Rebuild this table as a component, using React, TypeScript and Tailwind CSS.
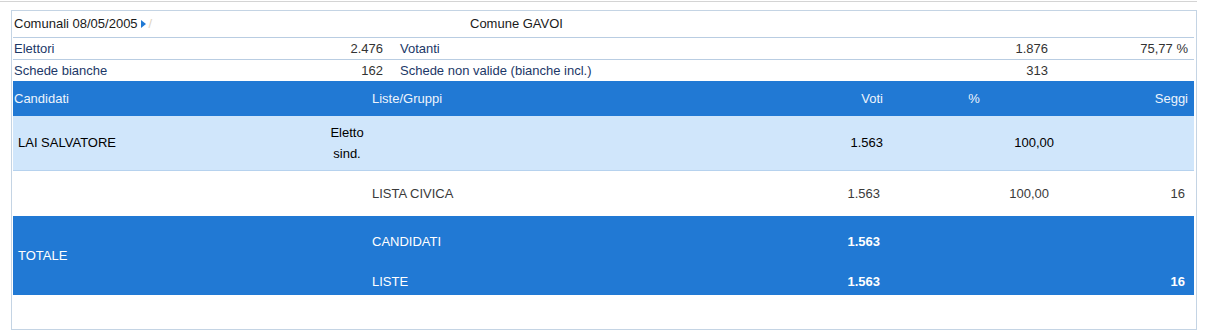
import React from "react"

const font = { fontFamily: '"Liberation Sans", Arial, sans-serif' }

function InfoRow({
  label,
  value,
  label2,
  value2,
  pct,
  last,
}: {
  label: string
  value: string
  label2: string
  value2: string
  pct?: string
  last?: boolean
}) {
  return (
    <div
      className={
        last
          ? "grid h-[21px] grid-cols-[300px_77px_610px_55px_138px] items-center text-[13px]"
          : "grid h-[22px] grid-cols-[300px_77px_610px_55px_138px] items-center border-b border-[#b9cde2] text-[13px]"
      }
    >
      <div className="pl-[1px] text-[#1c3867]">{label}</div>
      <div className="pr-[7px] text-right text-[#333]">{value}</div>
      <div className="pl-[10px] text-[#1c3867]">{label2}</div>
      <div className="pr-[7px] text-right text-[#333]">{value2}</div>
      <div className="pr-[5px] text-right text-[#333]">{pct}</div>
    </div>
  )
}

export default function App() {
  return (
    <div className="h-[336px] w-[1209px] bg-white" style={font}>
      <div className="mt-[1px] h-px w-[1197px] bg-[#d4d4d4]" />

      <div className="ml-[11px] mt-[8px] w-[1186px] border border-[#c4d4e4] pb-[34px] pl-px pr-[2px]">
        {/* election header */}
        <div className="flex h-[27px] items-center border-b border-[#b9cde2] text-[13px] text-[#1a1a1a]">
          <div className="flex w-[457px] items-center pl-[1px]">
            <span>Comunali 08/05/2005</span>
            <svg className="ml-[3px]" width="5" height="8" viewBox="0 0 5 8">
              <path d="M0 0 L5 4 L0 8 Z" fill="#2079d4" />
            </svg>
            <span className="ml-[3px] text-[#e0d4c2]">/</span>
          </div>
          <div>Comune GAVOI</div>
        </div>

        <InfoRow label="Elettori" value="2.476" label2="Votanti" value2="1.876" pct="75,77 %" />
        <InfoRow label="Schede bianche" value="162" label2="Schede non valide (bianche incl.)" value2="313" last />

        {/* results */}
        <div className="grid h-[35px] grid-cols-[312px_44px_431px_88px_172px_133px] items-center bg-[#2179d4] text-[13px] text-[#eef4fc]">
          <div className="pl-[1px]">Candidati</div>
          <div />
          <div className="pl-[3px]">Liste/Gruppi</div>
          <div className="pr-[5px] text-right">Voti</div>
          <div className="text-center">%</div>
          <div className="pr-[5px] text-right">Seggi</div>
        </div>

        <div className="grid h-[55px] grid-cols-[312px_44px_431px_88px_172px_133px] items-center border-b border-[#b6d2ee] bg-[#d0e6fb] text-[13px] text-black">
          <div className="pl-[5px]">LAI SALVATORE</div>
          <div className="text-center leading-[21px]">
            Eletto
            <br />
            sind.
          </div>
          <div />
          <div className="pr-[5px] text-right">1.563</div>
          <div className="pr-[6px] text-right">100,00</div>
          <div />
        </div>

        <div className="grid h-[45px] grid-cols-[312px_44px_431px_88px_172px_133px] items-center text-[13px] text-[#3a3a3a]">
          <div />
          <div />
          <div className="pl-[3px]">LISTA CIVICA</div>
          <div className="pr-[8px] text-right">1.563</div>
          <div className="pr-[11px] text-right">100,00</div>
          <div className="pr-[8px] text-right">16</div>
        </div>

        <div className="flex bg-[#2179d4] text-[13px] text-white">
          <div className="flex w-[356px] items-center pl-[5px]">TOTALE</div>
          <div className="flex-1">
            <div className="grid h-[52px] grid-cols-[431px_88px_172px_133px] items-center">
              <div className="pl-[3px]">CANDIDATI</div>
              <div className="pr-[8px] text-right font-bold">1.563</div>
              <div />
              <div />
            </div>
            <div className="grid h-[27px] grid-cols-[431px_88px_172px_133px] items-center">
              <div className="pl-[3px]">LISTE</div>
              <div className="pr-[8px] text-right font-bold">1.563</div>
              <div />
              <div className="pr-[8px] text-right font-bold">16</div>
            </div>
          </div>
        </div>
      </div>
    </div>
  )
}
